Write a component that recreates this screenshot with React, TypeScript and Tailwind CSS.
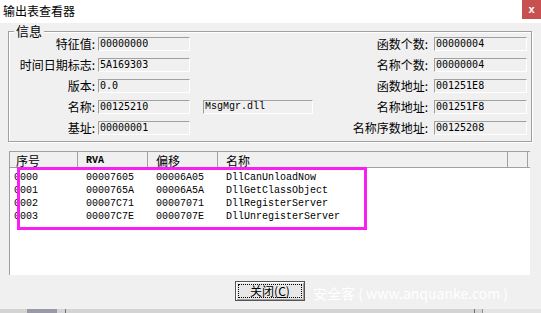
import React from 'react';

const cjk = "font-['Noto_Sans_CJK_SC',sans-serif]";

const leftRows = [
  { label: '特征值', value: '00000000' },
  { label: '时间日期标志', value: '5A169303' },
  { label: '版本', value: '0.0' },
  { label: '名称', value: '00125210', extra: 'MsgMgr.dll' },
  { label: '基址', value: '00000001' },
];

const rightRows = [
  { label: '函数个数', value: '00000004' },
  { label: '名称个数', value: '00000004' },
  { label: '函数地址', value: '001251E8' },
  { label: '名称地址', value: '001251F8' },
  { label: '名称序数地址', value: '00125208' },
];

const exports = [
  { idx: '0000', rva: '00007605', off: '00006A05', name: 'DllCanUnloadNow' },
  { idx: '0001', rva: '0000765A', off: '00006A5A', name: 'DllGetClassObject' },
  { idx: '0002', rva: '00007C71', off: '00007071', name: 'DllRegisterServer' },
  { idx: '0003', rva: '00007C7E', off: '0000707E', name: 'DllUnregisterServer' },
];

function Field({ value, className, serif }: { value: string; className: string; serif?: boolean }) {
  return (
    <div
      className={`h-[14px] border border-t-[#a0a0a0] border-l-[#a0a0a0] border-b-white border-r-white bg-[#f0f0f0] pl-[1px] text-[10px] leading-[12px] text-black whitespace-nowrap overflow-hidden ${
        serif ? "font-['Liberation_Mono',monospace]" : "font-['DejaVu_Sans_Mono',monospace]"
      } ${className}`}
    >
      {value}
    </div>
  );
}

export default function App() {
  return (
    <div className={`relative w-[541px] h-[313px] bg-[#f0f0f0] overflow-hidden ${cjk}`}>
      {/* Title bar */}
      <div className="h-[23px] bg-white flex items-start justify-between">
        <span className="pl-[3px] pt-[2px] text-[12px] leading-[18px] text-black">输出表查看器</span>
        <div className="w-[19px] h-[19px] bg-[#c75050] flex items-center justify-center text-white text-[11px] font-bold leading-none font-['Liberation_Sans',sans-serif]">
          x
        </div>
      </div>

      {/* Info group */}
      <div className="relative ml-[8px] mt-[8px] w-[524px] h-[111px] border border-[#a0a0a0] shadow-[1px_1px_0_#ffffff,inset_1px_1px_0_#ffffff]">
        <span className="absolute left-[5px] top-[-9px] bg-[#f0f0f0] px-[2px] text-[13px] leading-[16px] text-black">信息</span>
        <div className="flex flex-col gap-[7px] pt-[5px]">
          {leftRows.map((l, i) => {
            const r = rightRows[i];
            return (
              <div key={l.label} className="flex items-center h-[14px]">
                <div className="w-[86px] text-right text-[12px] leading-[14px] text-black whitespace-nowrap">{l.label}:</div>
                <Field value={l.value} className="ml-[3px] w-[92px]" />
                {l.extra ? (
                  <Field value={l.extra} serif className="ml-[13px] w-[110px]" />
                ) : (
                  <div className="ml-[13px] w-[110px]" />
                )}
                <div className="flex-1 text-right text-[12px] leading-[14px] text-black whitespace-nowrap">{r.label}:</div>
                <Field value={r.value} className="ml-[6px] mr-[4px] w-[93px]" />
              </div>
            );
          })}
        </div>
      </div>

      {/* Export list */}
      <div className="relative ml-[9px] mt-[9px] w-[521px] h-[124px] bg-white border-t border-l border-[#a0a0a0]">
        <div className="flex h-[16px] bg-[#f0f0f0] border-b border-[#a0a0a0] text-[12px] leading-[14px] text-black">
          <div className="w-[68px] pl-[6px] pt-[2px] border-r border-[#a0a0a0]">序号</div>
          <div className="w-[70px] pl-[8px] pt-[2px] border-r border-[#a0a0a0] font-['Liberation_Mono',monospace] text-[10px] font-bold">RVA</div>
          <div className="w-[70px] pl-[8px] pt-[2px] border-r border-[#a0a0a0]">偏移</div>
          <div className="w-[290px] pl-[8px] pt-[2px] border-r border-[#a0a0a0]">名称</div>
          <div className="w-[20px] border-r border-[#a0a0a0]" />
        </div>
        <div className="pt-[3px] font-['Liberation_Mono',monospace] text-[10px] leading-[13px] text-black">
          {exports.map((e) => (
            <div key={e.idx} className="flex h-[13px]">
              <div className="w-[68px] pl-[4px]">{e.idx}</div>
              <div className="w-[70px] pl-[8px]">{e.rva}</div>
              <div className="w-[70px] pl-[8px]">{e.off}</div>
              <div className="pl-[8px]">{e.name}</div>
            </div>
          ))}
        </div>
        {/* annotation */}
        <div className="absolute left-[7px] top-[15px] w-[350px] h-[63px] border-[3px] border-[#f81ef4]" />
      </div>

      {/* Footer */}
      <div className="flex justify-center pt-[6px] pr-[1px]">
        <button className="w-[70px] h-[20px] border border-[#555555] bg-[#e8e8e8] shadow-[inset_1px_1px_0_#ffffff,inset_-1px_-1px_0_#a0a0a0] p-[2px]">
          <div className="h-full border border-dotted border-black flex items-center justify-center text-[12px] leading-none text-black">
            关闭(<span className="underline">C</span>)
          </div>
        </button>
      </div>
      <span className="absolute left-[313px] top-[284px] text-[14px] leading-[18px] text-white whitespace-nowrap">
        安全客 ( www.anquanke.com )
      </span>

      {/* bottom strip */}
      <div className="absolute left-0 bottom-0 w-full h-[4px] bg-[#d4d4d4] flex">
        <div className="ml-[27px] w-[30px] h-full bg-[#9a9aa6]" />
        <div className="ml-[8px] w-px h-full bg-[#707070]" />
        <div className="ml-[408px] w-px h-full bg-[#707070]" />
        <div className="ml-[7px] w-px h-full bg-[#909090]" />
        <div className="flex-1 h-full bg-[#e4e4e4]" />
      </div>
    </div>
  );
}
